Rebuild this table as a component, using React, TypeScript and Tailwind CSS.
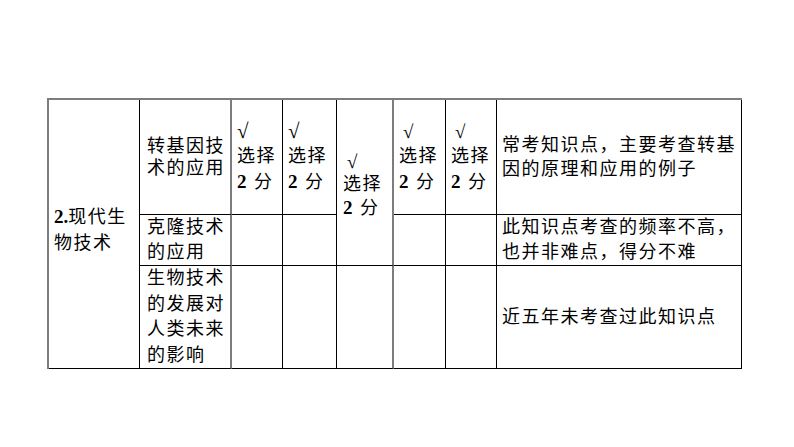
import React from "react";

const font = { fontFamily: '"Liberation Serif", "Noto Sans CJK SC", serif' };

function Score({ bold, indent }: { bold?: boolean; indent?: boolean }) {
  return (
    <div className="flex flex-col">
      <span className={`${bold ? "font-black text-[19px]" : "text-[21px]"} ${indent ? "pl-[4px]" : ""} leading-[25px]`}>√</span>
      <span className="leading-[25px]">选择</span>
      <span className="leading-[25px]">
        <b className="font-bold text-[19px]">2</b> 分
      </span>
    </div>
  );
}

export default function App() {
  const cell = "border-r border-b border-black flex items-center";
  return (
    <div className="w-[794px] h-[447px] bg-white text-black" style={font}>
      <div className="pt-[98px] pl-[47px]">
        <div className="grid w-[695px] grid-cols-[91px_92px_51px_54px_57px_52px_51px_245px] grid-rows-[115px_51px_103px] border-t-2 border-l-2 border-t-[#7d7d7d] border-l-[#7d7d7d] text-[18px] tracking-[1.5px]">
          {/* row 1 */}
          <div className={`${cell} row-span-3 pl-[5px] pb-[8px] leading-[26px]`}>
            <div>
              <b className="font-bold tracking-normal text-[19px]">2.</b>现代生
              <br />
              物技术
            </div>
          </div>
          <div className={`${cell} border-r-2 border-r-[#7d7d7d] pl-[7px] leading-[22px]`}>
            <div>
              转基因技
              <br />
              术的应用
            </div>
          </div>
          <div className={`${cell} pl-[5px]`}>
            <Score />
          </div>
          <div className={`${cell} pl-[5px]`}>
            <Score />
          </div>
          <div className={`${cell} row-span-2 border-r-2 border-r-[#7d7d7d] pl-[6px] pt-[4px]`}>
            <div className="flex flex-col">
              <span className="font-black text-[19px] pl-[4px] leading-[23px]">√</span>
              <span className="leading-[23px]">选择</span>
              <span className="leading-[23px]">
                <b className="font-bold text-[19px]">2</b> 分
              </span>
            </div>
          </div>
          <div className={`${cell} pl-[5px]`}>
            <Score bold indent />
          </div>
          <div className={`${cell} pl-[5px]`}>
            <Score bold indent />
          </div>
          <div className={`${cell} pl-[5px] leading-[24px]`}>
            <div>
              常考知识点，主要考查转基
              <br />
              因的原理和应用的例子
            </div>
          </div>

          {/* row 2 */}
          <div className={`${cell} border-r-2 border-r-[#7d7d7d] pl-[7px] leading-[25px]`}>
            <div>
              克隆技术
              <br />
              的应用
            </div>
          </div>
          <div className={cell}></div>
          <div className={cell}></div>
          <div className={cell}></div>
          <div className={cell}></div>
          <div className={`${cell} pl-[5px] leading-[25px]`}>
            <div>
              此知识点考查的频率不高，
              <br />
              也并非难点，得分不难
            </div>
          </div>

          {/* row 3 */}
          <div className={`${cell} border-r-2 border-r-[#7d7d7d] pl-[7px] leading-[25.5px]`}>
            <div>
              生物技术
              <br />
              的发展对
              <br />
              人类未来
              <br />
              的影响
            </div>
          </div>
          <div className={cell}></div>
          <div className={cell}></div>
          <div className={`${cell} border-r-2 border-r-[#7d7d7d]`}></div>
          <div className={cell}></div>
          <div className={cell}></div>
          <div className={`${cell} pl-[5px] leading-[25px]`}>
            <div>近五年未考查过此知识点</div>
          </div>
        </div>
      </div>
    </div>
  );
}
